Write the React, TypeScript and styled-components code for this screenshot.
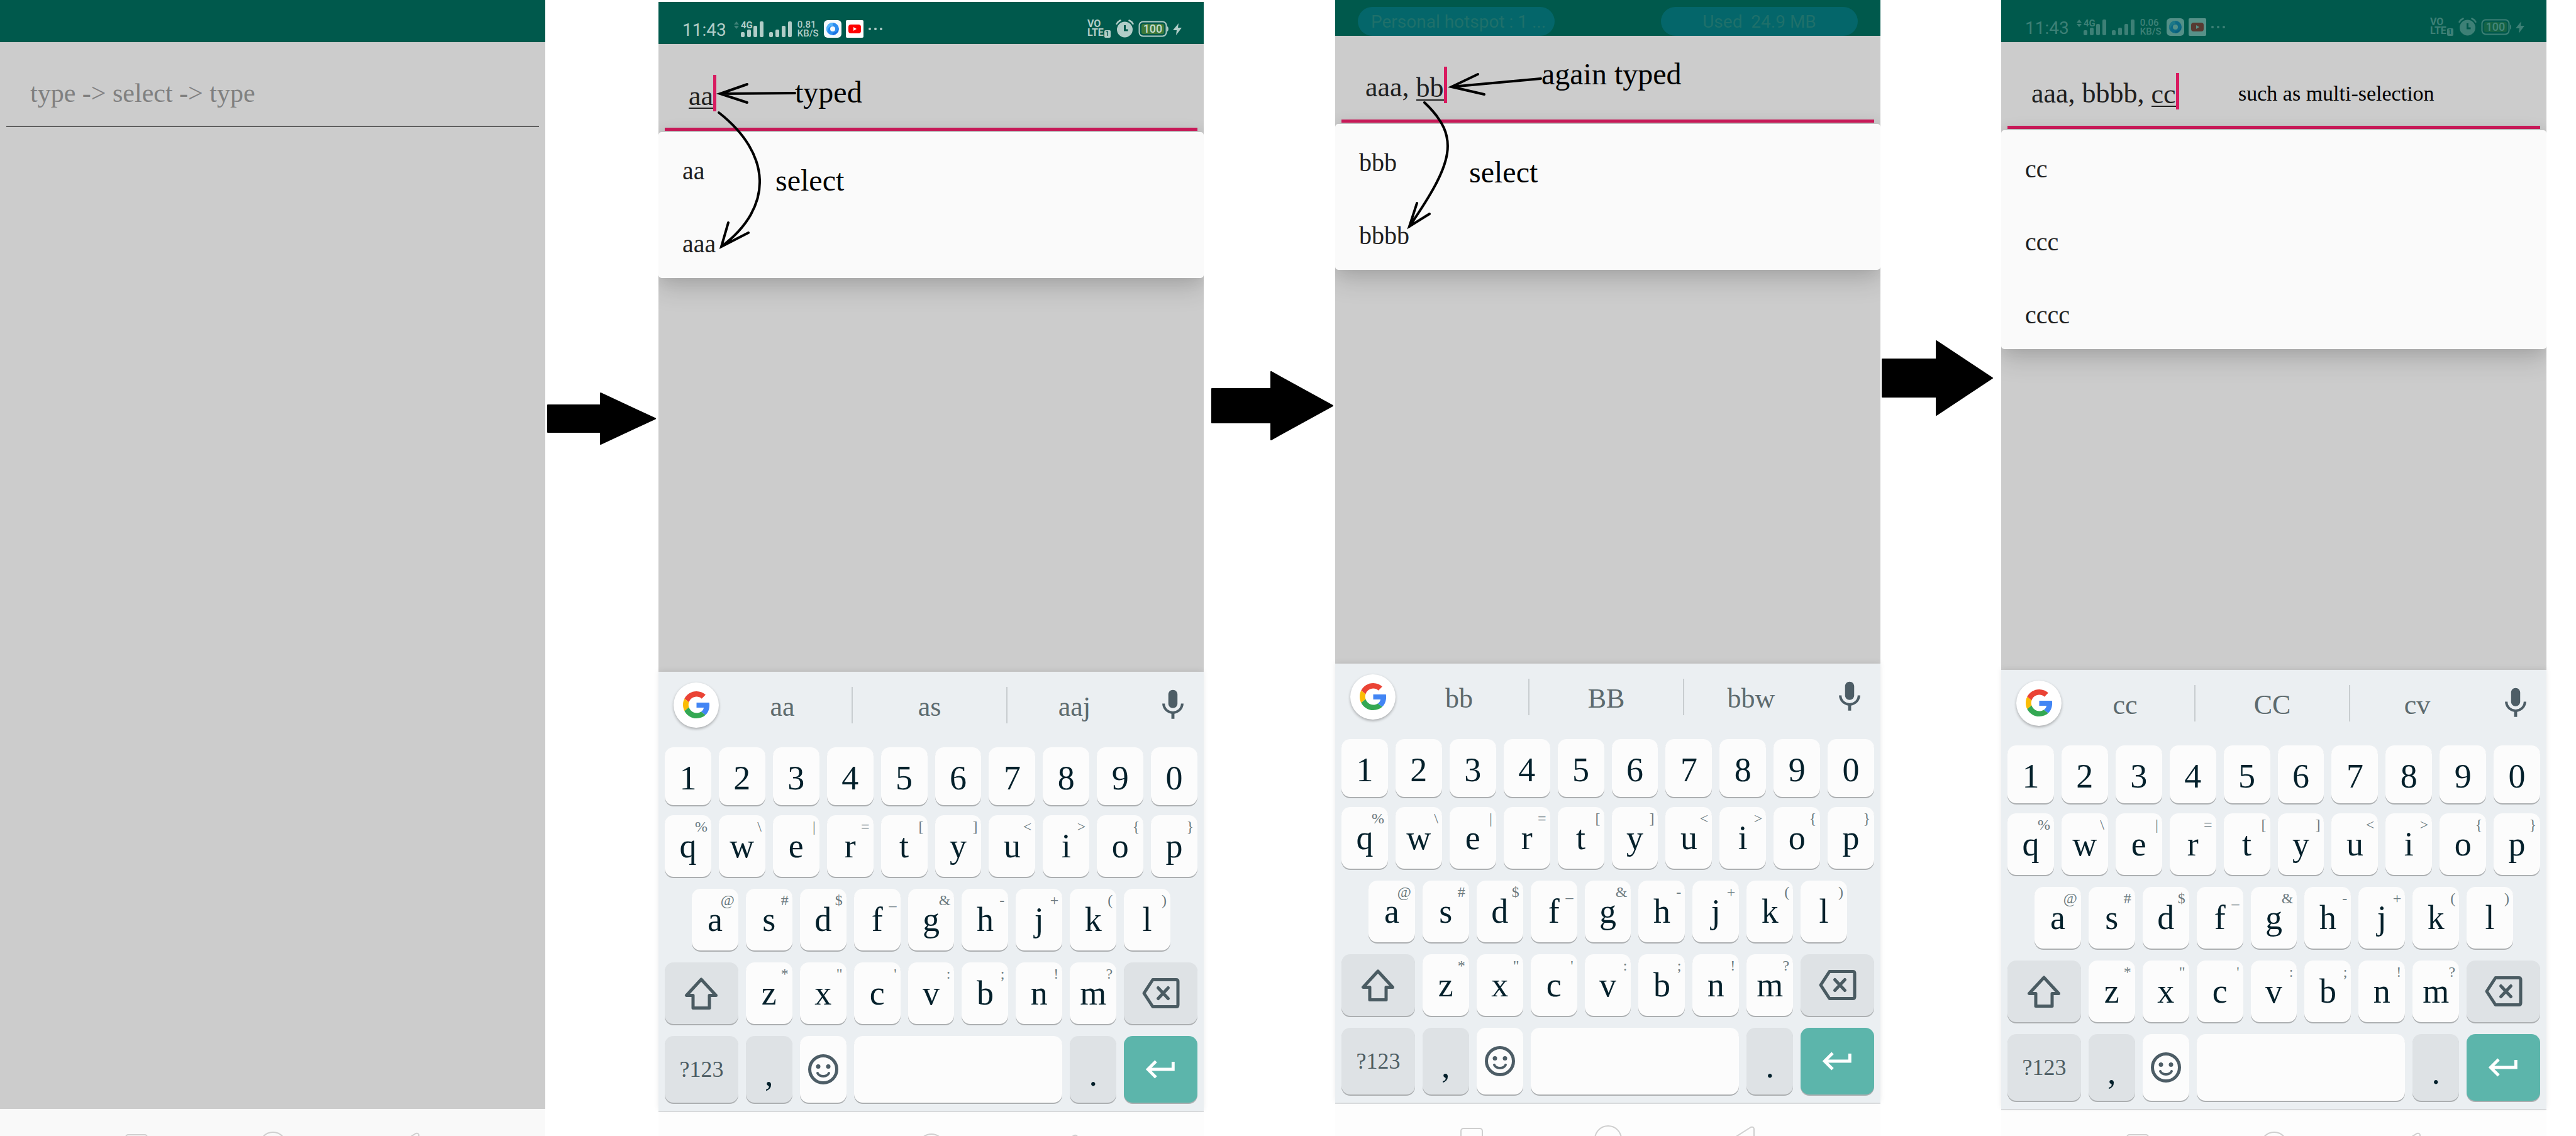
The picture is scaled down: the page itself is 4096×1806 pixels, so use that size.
import React from "react";
import styled, { createGlobalStyle } from "styled-components";

const serif = '"Liberation Serif", "Times New Roman", serif';
const sans = 'Roboto, "Liberation Sans", sans-serif';

const GlobalStyle = createGlobalStyle`
  * { box-sizing: border-box; }
  body { margin: 0; background: #ffffff; font-family: ${serif}; overflow: hidden; }
  button, input { font-family: inherit; border: 0; padding: 0; margin: 0; background: none; color: inherit; }
  ul { list-style: none; margin: 0; padding: 0; }
  svg { display: block; flex-shrink: 0; }
`;

/* ---------- page ---------- */

const Flow = styled.main`
  display: grid;
  grid-template-columns: 867fr 180fr 867fr 209fr 867fr 192fr 867fr 47fr;
  align-items: start;
  height: 100vh;
  overflow: hidden;
`;

const Phone = styled.section<{ $shift?: number }>`
  position: relative;
  display: flex;
  flex-direction: column;
  height: calc(100vh + 71px);
  margin-top: ${(p) => p.$shift ?? 0}px;
  min-width: 0;
`;

const Step = styled.div<{ $top: number; $left: number }>`
  padding-top: ${(p) => p.$top}px;
  padding-left: ${(p) => p.$left}px;
`;

/* ---------- status bar ---------- */

const Header = styled.header`
  display: flex;
  align-items: flex-end;
  height: 67px;
  background: #00594c;
  color: #b2cdc8;
  font-family: ${sans};
  flex-shrink: 0;
`;

const StatusRow = styled.div<{ $dim?: boolean }>`
  display: flex;
  flex: 1;
  align-items: flex-end;
  padding: 0 35px 10px 38px;
  opacity: ${(p) => (p.$dim ? 0.34 : 1)};
`;

const StatusGroup = styled.div<{ $gap: number; $end?: boolean }>`
  display: flex;
  align-items: flex-end;
  gap: ${(p) => p.$gap}px;
  margin-left: ${(p) => (p.$end ? "auto" : "0")};
`;

const Clock = styled.time`
  font-size: 28px;
  line-height: 24px;
`;

const TwoLines = styled.div<{ $bold?: boolean }>`
  font-size: ${(p) => (p.$bold ? 16 : 15)}px;
  line-height: 14px;
  font-weight: ${(p) => (p.$bold ? 700 : 500)};
  width: ${(p) => (p.$bold ? 38 : 34)}px;
  white-space: nowrap;
`;

const SimBadge = styled.span`
  display: inline-block;
  margin-left: 1px;
  padding: 0 2px;
  border-radius: 2px;
  background: #b2cdc8;
  color: #00594c;
  font-size: 10px;
  line-height: 12px;
`;

const PillRow = styled.div`
  display: flex;
  flex: 1;
  justify-content: space-between;
  padding: 0 36px;
`;

const Pill = styled.div<{ $start?: boolean }>`
  display: flex;
  align-items: center;
  justify-content: ${(p) => (p.$start ? "flex-start" : "center")};
  width: 313px;
  height: 46px;
  padding-left: ${(p) => (p.$start ? 21 : 0)}px;
  border-radius: 23px;
  background: #04666a;
  color: #1f706a;
  font-size: 28px;
  white-space: pre;
`;

/* ---------- screen body ---------- */

const Body = styled.div`
  flex: 1;
  min-height: 0;
  overflow: hidden;
  background: #cccccc;
`;

const Field = styled.div`
  display: flex;
  align-items: flex-start;
  height: 133px;
  padding: 49px 10px 0 48px;
  font-size: 44px;
  color: #202020;
`;

const Hint = styled.input`
  flex: 1;
  min-width: 0;
  height: 58px;
  margin-top: 3px;
  font-size: 42px;
  outline: none;
  &::placeholder { color: #808080; opacity: 1; }
`;

const Committed = styled.span`
  margin-top: 14px;
  line-height: 38px;
  white-space: pre;
`;

const Composing = styled.input`
  field-sizing: content;
  height: 40px;
  margin-top: 14px;
  border-bottom: 2px solid #202020;
  font-size: 44px;
  line-height: 38px;
  caret-color: transparent;
  outline: none;
`;

const Caret = styled.span`
  width: 5px;
  height: 58px;
  background: #d81b60;
`;

const FieldLine = styled.div<{ $active?: boolean }>`
  height: ${(p) => (p.$active ? 5 : 2)}px;
  margin: 0 10px;
  background: ${(p) => (p.$active ? "#d01b5c" : "#606060")};
`;

const Options = styled.ul`
  position: relative;
  margin-top: 2px;
  border-radius: 5px;
  background: #fafafa;
  box-shadow: 0 16px 40px rgba(0, 0, 0, 0.16), 0 2px 24px rgba(0, 0, 0, 0.08);
`;

const Option = styled.button`
  display: flex;
  align-items: center;
  width: 100%;
  height: 116px;
  padding: 6px 0 0 38px;
  font-size: 40px;
  color: #202020;
`;

/* ---------- keyboard ---------- */

const Keyboard = styled.div`
  position: relative;
  flex-shrink: 0;
  height: 698px;
  background: #ebeff2;
  box-shadow: 0 -2px 8px rgba(0, 0, 0, 0.08);
`;

const Strip = styled.div`
  display: grid;
  grid-template-columns: 87px 222fr 246fr 213fr 99px;
  align-items: center;
  height: 105px;
  margin-bottom: 15px;
`;

const GoogleButton = styled.button`
  display: flex;
  align-items: center;
  justify-content: center;
  width: 72px;
  height: 72px;
  margin-left: 24px;
  border-radius: 50%;
  background: #ffffff;
  box-shadow: 0 2px 4px rgba(0, 0, 0, 0.3);
`;

const Suggestion = styled.button<{ $divided?: boolean }>`
  height: 58px;
  padding-top: 6px;
  border-right: ${(p) => (p.$divided ? "2px solid #c8cdd0" : "0")};
  color: #5d6a6e;
  font-size: 44px;
`;

const MicButton = styled.button`
  display: flex;
  justify-content: center;
`;

const Rows = styled.div`
  display: flex;
  flex-direction: column;
  gap: 19px;
  padding: 0 10px;
`;

const FirstRows = styled.div`
  display: flex;
  flex-direction: column;
  gap: 16px;
`;

const KeyRow = styled.div<{ $height: number; $inset?: boolean }>`
  display: flex;
  gap: 12px;
  height: ${(p) => p.$height}px;
  padding: 0 ${(p) => (p.$inset ? 43 : 0)}px;
`;

type Tone = "light" | "grey" | "teal";
const tones: Record<Tone, string> = { light: "#fcfcfc", grey: "#dee2e5", teal: "#5cb5ab" };

const Key = styled.button<{ $grow?: number; $tone?: Tone; $size?: number; $drop?: number }>`
  position: relative;
  display: flex;
  align-items: center;
  justify-content: center;
  flex: ${(p) => p.$grow ?? 74} 1 0;
  min-width: 0;
  height: 100%;
  padding-top: ${(p) => p.$drop ?? 0}px;
  border-radius: 14px;
  background: ${(p) => tones[p.$tone ?? "light"]};
  box-shadow: 0 2px 0 #acafb1;
  color: ${(p) => (p.$size ? "#4d5d64" : "#03202b")};
  font-size: ${(p) => p.$size ?? 54}px;
  line-height: 60px;
`;

const KeyHint = styled.span`
  position: absolute;
  top: 6px;
  right: 6px;
  color: #6b7a80;
  font-size: 24px;
  line-height: 24px;
`;

/* ---------- navigation bar ---------- */

const NavBar = styled.nav<{ $plain?: boolean }>`
  display: grid;
  grid-template-columns: repeat(3, 1fr);
  place-items: center;
  flex-shrink: 0;
  height: 114px;
  padding: 0 12.5%;
  border-top: 2px solid ${(p) => (p.$plain ? "#f9f9f9" : "#dcdee0")};
  background: ${(p) => (p.$plain ? "#f9f9f9" : "#fdfdfd")};
`;

const NavButton = styled.button`
  display: flex;
`;

/* ---------- annotations drawn over the phones ---------- */

const Sketch = styled.svg`
  position: absolute;
  top: 0;
  left: 0;
  pointer-events: none;
  fill: none;
  stroke: #000000;
  stroke-width: 4px;
  stroke-linecap: round;
`;

const Note = styled.span<{ $x: number; $y: number; $small?: boolean }>`
  position: absolute;
  left: ${(p) => p.$x}px;
  top: ${(p) => p.$y}px;
  color: #000000;
  font-size: ${(p) => (p.$small ? 34 : 48)}px;
  line-height: 48px;
  white-space: nowrap;
`;

/* ---------- icons ---------- */

const SignalBars = ({ label }: { label?: string }) => (
  <svg width="36" height="28" viewBox="0 0 36 28" fill="#b2cdc8">
    {label && <text x="0" y="13" fontSize="15" fontWeight="700" fontFamily={sans}>{label}</text>}
    <rect x="0" y="19" width="6" height="8" rx="2" />
    <rect x="10" y="15" width="6" height="12" rx="2" />
    <rect x="20" y="9" width="6" height="18" rx="2" />
    <rect x="30" y="2" width="6" height="25" rx="2" />
  </svg>
);

const DataArrows = ({ active }: { active?: boolean }) => (
  <svg width="8" height="28" viewBox="0 0 8 28" fill="#b2cdc8" opacity={active ? 1 : 0.35}>
    <path d="M4 2 8 7H0ZM4 14 0 9h8Z" />
  </svg>
);

const BrowserIcon = () => (
  <svg width="28" height="28" viewBox="0 0 28 28">
    <rect width="28" height="28" rx="6" fill="#f6f9fc" />
    <circle cx="14" cy="14" r="10" fill="#2b8cf0" />
    <path d="M14 4a10 10 0 0 0-8 16c-1-6 3-11 8-11z" fill="#56b4fa" />
    <path d="M14 24a10 10 0 0 0 9-12c0 5-4 8-9 8z" fill="#1a6fe0" />
    <circle cx="14" cy="14" r="4" fill="#f6f9fc" />
  </svg>
);

const VideoIcon = () => (
  <svg width="28" height="28" viewBox="0 0 28 28">
    <rect width="28" height="28" rx="2" fill="#ffffff" />
    <rect x="4" y="7" width="20" height="14" rx="4" fill="#ff0000" />
    <path d="M12 11v6l5-3z" fill="#ffffff" />
  </svg>
);

const MoreDots = () => (
  <svg width="22" height="28" viewBox="0 0 22 28" fill="#b2cdc8">
    <circle cx="2" cy="14" r="2" />
    <circle cx="11" cy="14" r="2" />
    <circle cx="20" cy="14" r="2" />
  </svg>
);

const AlarmIcon = () => (
  <svg width="29" height="29" viewBox="0 0 29 29" fill="none" stroke="#b2cdc8">
    <circle cx="14.500" cy="16" r="12.500" fill="#b2cdc8" stroke="none" />
    <path d="M14.500 9v8h5" stroke="#00594c" strokeWidth="3" />
    <path d="M1.500 7C3 4 5 2.500 7.500 1.500M27.500 7C26 4 24 2.500 21.500 1.500" strokeWidth="2.500" strokeLinecap="round" />
  </svg>
);

const BatteryIcon = () => (
  <svg width="48" height="28" viewBox="0 0 48 28">
    <rect x="1.500" y="2.500" width="43" height="23" rx="6" fill="none" stroke="#b2cdc8" strokeWidth="2" />
    <rect x="5" y="6" width="36" height="16" rx="3" fill="#3c7838" />
    <path d="M46 10c2.500 1 2.500 7 0 8z" fill="#b2cdc8" />
    <text x="23" y="20" fontSize="18" fontWeight="500" fontFamily={sans} textAnchor="middle" fill="#c6dccf">100</text>
  </svg>
);

const BoltIcon = () => (
  <svg width="14" height="28" viewBox="0 0 14 28" fill="#b2cdc8">
    <path d="M9 5 0 16h6l-1 8 9-12H8z" />
  </svg>
);

const GoogleLogo = () => (
  <svg width="43" height="43" viewBox="0 0 48 48">
    <path fill="#ea4335" d="M24 9.500c3.540 0 6.710 1.220 9.210 3.600l6.850-6.850C35.900 2.380 30.470 0 24 0 14.620 0 6.510 5.380 2.560 13.220l7.980 6.190C12.430 13.720 17.740 9.500 24 9.500z" />
    <path fill="#4285f4" d="M46.980 24.550c0-1.570-.15-3.090-.38-4.550H24v9.020h12.940c-.58 2.960-2.260 5.480-4.780 7.180l7.730 6c4.510-4.180 7.090-10.360 7.090-17.650z" />
    <path fill="#fbbc05" d="M10.530 28.590c-.48-1.450-.76-2.990-.76-4.590s.27-3.140.76-4.590l-7.980-6.190C.92 16.460 0 20.120 0 24c0 3.880.92 7.540 2.560 10.780l7.970-6.190z" />
    <path fill="#34a853" d="M24 48c6.480 0 11.930-2.130 15.890-5.810l-7.730-6c-2.150 1.450-4.920 2.300-8.160 2.300-6.260 0-11.570-4.220-13.470-9.910l-7.980 6.190C6.510 42.620 14.620 48 24 48z" />
  </svg>
);

const MicIcon = () => (
  <svg width="58" height="58" viewBox="0 0 24 24" fill="#4d5d66">
    <path d="M12 14c1.660 0 2.990-1.340 2.990-3L15 5c0-1.660-1.340-3-3-3S9 3.340 9 5v6c0 1.660 1.340 3 3 3zm5.300-3c0 3-2.540 5.100-5.300 5.100S6.700 14 6.700 11H5c0 3.410 2.720 6.230 6 6.720V21h2v-3.280c3.280-.48 6-3.300 6-6.720h-1.700z" />
  </svg>
);

const ShiftIcon = () => (
  <svg width="54" height="54" viewBox="0 0 54 54" fill="none" stroke="#4a5b62" strokeWidth="5" strokeLinejoin="round">
    <path d="M27 5 3.500 30.500H14V50.500H40V30.500H50.500Z" />
  </svg>
);

const BackspaceIcon = () => (
  <svg width="60" height="50" viewBox="0 0 60 50" fill="none" stroke="#4a5b62" strokeWidth="5" strokeLinejoin="round" strokeLinecap="round">
    <path d="M17 3.500H54Q57 3.500 57 6.500V43.500Q57 46.500 54 46.500H17L3 25Z" />
    <path d="M25.500 16.500 41.500 33.500M41.500 16.500 25.500 33.500" />
  </svg>
);

const SmileIcon = () => (
  <svg width="48" height="48" viewBox="0 0 48 48" fill="none" stroke="#4d5d66">
    <circle cx="24" cy="24" r="21.500" strokeWidth="5" />
    <circle cx="16" cy="19.500" r="3.500" fill="#4d5d66" stroke="none" />
    <circle cx="32" cy="19.500" r="3.500" fill="#4d5d66" stroke="none" />
    <path d="M15 30c3 6.500 15 6.500 18 0" strokeWidth="4" strokeLinecap="round" />
  </svg>
);

const EnterIcon = () => (
  <svg width="58" height="58" viewBox="0 0 24 24" fill="#ffffff">
    <path d="M19 7v4H5.830l3.580-3.590L8 6l-6 6 6 6 1.410-1.410L5.830 13H21V7z" />
  </svg>
);

const RecentIcon = () => (
  <svg width="36" height="36" viewBox="0 0 36 36" fill="none" stroke="#cfcfcf" strokeWidth="2">
    <rect x="1" y="1" width="34" height="34" rx="4" />
  </svg>
);

const HomeIcon = () => (
  <svg width="44" height="44" viewBox="0 0 44 44" fill="none" stroke="#cfcfcf" strokeWidth="2">
    <circle cx="22" cy="22" r="21" />
  </svg>
);

const BackIcon = () => (
  <svg width="36" height="42" viewBox="0 0 36 42" fill="none" stroke="#cfcfcf" strokeWidth="2" strokeLinejoin="round">
    <path d="M29 2 3 18.500Q1 21 3 23.500L29 40Q34 41 34 37V5Q34 1 29 2Z" />
  </svg>
);

const BlockArrow = ({ w, h, neck, inset }: { w: number; h: number; neck: number; inset: number }) => (
  <svg width={w} height={h} viewBox={`0 0 ${w} ${h}`} role="img" aria-label="then">
    <polygon
      points={`1,${inset + 1} ${neck + 1},${inset + 1} ${neck + 1},1 ${w - 1},${h / 2} ${neck + 1},${h - 1} ${neck + 1},${h - inset - 1} 1,${h - inset - 1}`}
      stroke="#000000"
      strokeWidth="2"
      strokeLinejoin="round"
    />
  </svg>
);

/* ---------- composed parts ---------- */

const StatusBar = ({ speed, dim, active }: { speed: string; dim?: boolean; active?: boolean }) => (
  <Header>
    <StatusRow $dim={dim}>
      <StatusGroup $gap={12}>
        <Clock>11:43</Clock>
        <StatusGroup $gap={3}>
          <DataArrows active={active} />
          <SignalBars label="4G" />
        </StatusGroup>
      </StatusGroup>
      <StatusGroup $gap={8}>
        <StatusGroup $gap={9}>
          <span />
          <SignalBars />
          <TwoLines>{speed}<br />KB/S</TwoLines>
        </StatusGroup>
        <StatusGroup $gap={7}>
          <BrowserIcon />
          <VideoIcon />
        </StatusGroup>
        <MoreDots />
      </StatusGroup>
      <StatusGroup $gap={7} $end>
        <TwoLines $bold>VO<br />LTE<SimBadge>1</SimBadge></TwoLines>
        <AlarmIcon />
        <BatteryIcon />
        <BoltIcon />
      </StatusGroup>
    </StatusRow>
  </Header>
);

const EntryField = ({ done, typed }: { done?: string; typed: string }) => (
  <>
    <Field>
      {done && <Committed>{done}</Committed>}
      <Composing aria-label="Multi selection entry" defaultValue={typed} />
      <Caret />
    </Field>
    <FieldLine $active />
  </>
);

const OptionList = ({ items }: { items: string[] }) => (
  <Options>
    {items.map((item) => (
      <li key={item}><Option type="button">{item}</Option></li>
    ))}
  </Options>
);

const digits = "1234567890".split("");
const topRow = ["q%", "w\\", "e|", "r=", "t[", "y]", "u<", "i>", "o{", "p}"];
const midRow = ["a@", "s#", "d$", "f_", "g&", "h-", "j+", "k(", "l)"];
const lowRow = ["z*", 'x"', "c'", "v:", "b;", "n!", "m?"];

const LetterKeys = ({ keys }: { keys: string[] }) => (
  <>
    {keys.map((k) => (
      <Key key={k} type="button">{k[0]}<KeyHint>{k[1]}</KeyHint></Key>
    ))}
  </>
);

const OnScreenKeyboard = ({ words }: { words: string[] }) => (
  <Keyboard>
    <Strip>
      <GoogleButton type="button" aria-label="Google"><GoogleLogo /></GoogleButton>
      {words.map((w, i) => (
        <Suggestion key={w} type="button" $divided={i < 2}>{w}</Suggestion>
      ))}
      <MicButton type="button" aria-label="Voice input"><MicIcon /></MicButton>
    </Strip>
    <Rows>
      <FirstRows>
        <KeyRow $height={92}>
          {digits.map((d) => <Key key={d} type="button" $drop={6}>{d}</Key>)}
        </KeyRow>
        <KeyRow $height={98}><LetterKeys keys={topRow} /></KeyRow>
      </FirstRows>
      <KeyRow $height={98} $inset><LetterKeys keys={midRow} /></KeyRow>
      <KeyRow $height={98}>
        <Key type="button" $grow={117} $tone="grey" aria-label="Shift"><ShiftIcon /></Key>
        <LetterKeys keys={lowRow} />
        <Key type="button" $grow={117} $tone="grey" aria-label="Backspace"><BackspaceIcon /></Key>
      </KeyRow>
      <KeyRow $height={106}>
        <Key type="button" $grow={117} $tone="grey" $size={36}>?123</Key>
        <Key type="button" $tone="grey" $drop={16}>,</Key>
        <Key type="button" aria-label="Emoji"><SmileIcon /></Key>
        <Key type="button" $grow={332} aria-label="Space" />
        <Key type="button" $tone="grey" $drop={16}>.</Key>
        <Key type="button" $grow={117} $tone="teal" aria-label="Enter"><EnterIcon /></Key>
      </KeyRow>
    </Rows>
  </Keyboard>
);

const Navigation = ({ plain }: { plain?: boolean }) => (
  <NavBar $plain={plain}>
    <NavButton type="button" aria-label="Recent apps"><RecentIcon /></NavButton>
    <NavButton type="button" aria-label="Home"><HomeIcon /></NavButton>
    <NavButton type="button" aria-label="Back"><BackIcon /></NavButton>
  </NavBar>
);

export default function App() {
  return (
    <>
      <GlobalStyle />
      <Flow>
        <Phone>
          <Header />
          <Body>
            <Field>
              <Hint aria-label="Multi selection entry" placeholder="type -> select -> type" />
            </Field>
            <FieldLine />
          </Body>
          <Navigation plain />
        </Phone>

        <Step $top={624} $left={3}><BlockArrow w={173} h={83} neck={84} inset={19} /></Step>

        <Phone $shift={3}>
          <StatusBar speed="0.81" />
          <Body>
            <EntryField typed="aa" />
            <OptionList items={["aa", "aaa"]} />
          </Body>
          <OnScreenKeyboard words={["aa", "as", "aaj"]} />
          <Navigation />
          <Sketch width="400" height="420">
            <path d="M217 145 98 146M141 131 98 146 141 160" />
            <path d="M96 176C180 242 184 326 100 389M111 351 100 389 143 367" />
          </Sketch>
          <Note $x={217} $y={120}>typed</Note>
          <Note $x={186} $y={260}>select</Note>
        </Phone>

        <Step $top={590} $left={12}><BlockArrow w={194} h={110} neck={94} inset={27} /></Step>

        <Phone $shift={-10}>
          <Header>
            <PillRow>
              <Pill $start>Personal hotspot : 1 ...</Pill>
              <Pill>{"Used  24.9 MB"}</Pill>
            </PillRow>
          </Header>
          <Body>
            <EntryField done="aaa, " typed="bb" />
            <OptionList items={["bbb", "bbbb"]} />
          </Body>
          <OnScreenKeyboard words={["bb", "BB", "bbw"]} />
          <Navigation />
          <Sketch width="400" height="420">
            <path d="M327 135 185 148M227 128 185 148 237 160" />
            <path d="M142 173C200 228 188 268 118 370M130 333 118 370 150 350" />
          </Sketch>
          <Note $x={328} $y={104}>again typed</Note>
          <Note $x={213} $y={260}>select</Note>
        </Phone>

        <Step $top={541} $left={2}><BlockArrow w={177} h={120} neck={86} inset={29} /></Step>

        <Phone>
          <StatusBar speed="0.06" dim active />
          <Body>
            <EntryField done="aaa, bbbb, " typed="cc" />
            <OptionList items={["cc", "ccc", "cccc"]} />
          </Body>
          <OnScreenKeyboard words={["cc", "CC", "cv"]} />
          <Navigation />
          <Note $x={377} $y={125} $small>such as multi-selection</Note>
        </Phone>
      </Flow>
    </>
  );
}
